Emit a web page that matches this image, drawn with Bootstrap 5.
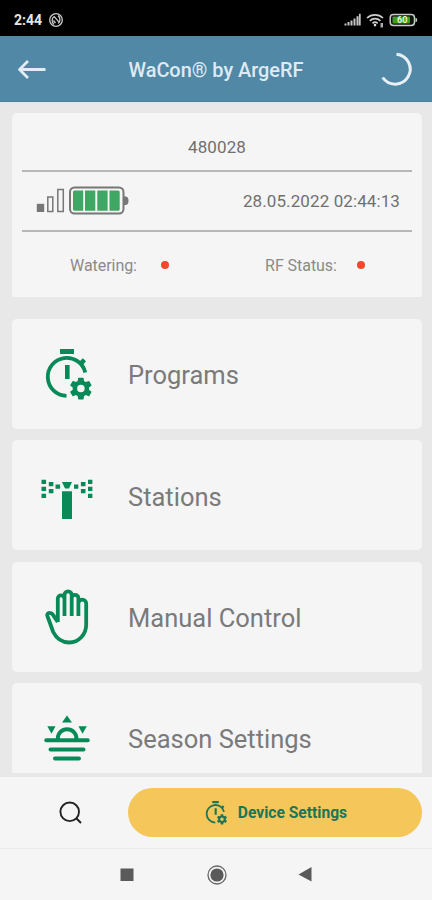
<!DOCTYPE html>
<html lang="en">
<head>
<meta charset="utf-8">
<meta name="viewport" content="width=device-width, initial-scale=1">
<title>WaCon® by ArgeRF</title>
<link href="https://cdn.jsdelivr.net/npm/bootstrap@5.3.0/dist/css/bootstrap.min.css" rel="stylesheet">
<style>
  body { font-family: Roboto, "Liberation Sans", sans-serif; background: #e8e8e8; color: #707070; }
  svg { display: block; flex-shrink: 0; }
  .phone { width: 432px; height: 900px; }
  .statusbar { height: 36px; background: #000; color: #e6e6e6; padding: 3px 12px 0 14px; }
  .clock { font-size: 14px; font-weight: 700; width: 30px; white-space: nowrap; padding-top: 1px; }
  .appbar { height: 66px; background: #5088a6; padding: 0 18px 0 17px; border-bottom: 1px solid #4a7f9b; }
  .apptitle { font-size: 19.9px; font-weight: 500; color: #dfeaf2; white-space: nowrap; padding: 4px 0 0 5px; }
  .content { padding: 11px 10px 0 12px; }
  .panel { background: #f5f5f5; border: 0; border-radius: 5px; color: #707070; }
  .info { height: 184px; padding: 0 10px; margin-bottom: 22px; font-size: 17px; border-radius: 5px 5px 2px 2px; }
  .serial { height: 59px; padding-top: 13px; border-bottom: 2px solid #b7b7b7; letter-spacing: .1px; }
  .meter { height: 60px; border-bottom: 2px solid #b7b7b7; padding: 0 12px 1px 14px; }
  .stamp { letter-spacing: .1px; padding-top: 3px; }
  .states { height: 65px; padding-top: 2px; font-size: 16px; color: #8a8a8a; }
  .states .slabel { letter-spacing: -.05px; padding-top: 1px; }
  .states .second { padding-left: 5px; }
  .dot { width: 8px; height: 8px; background: #f04a28; margin-top: -1px; }
  .second .dot { margin-left: 20px; margin-right: 4px; }
  .entry { height: 110px; margin-bottom: 11.4px; padding-left: 28px; font-size: 25.5px; color: #7a7a7a; font-weight: 400; }
  .entry span { margin-left: 32px; padding-top: 3px; }
  .entry svg { margin-top: 2px; }
  .clipped { height: 90px; padding-top: 25px; }
  .clipped span { padding-top: 12px; line-height: 38px; }
  .green { color: #078a58; }
  .actions { height: 72px; background: #f5f5f5; padding: 0 10px 0 57px; border-bottom: 1px solid #ebebeb; }
  .device { width: 294px; height: 49px; background: #f5c75b; color: #1b7656; font-size: 15.6px; font-weight: 700; }
  .device:hover { background: #eebf52; color: #1b7656; }
  .dlabel { padding: 3px 0 0 1px; }
  .sysnav { height: 51px; background: #f5f5f5; }
</style>
</head>
<body>
<svg width="0" height="0" class="position-absolute" aria-hidden="true">
  <symbol id="timer" viewBox="40 345 56 60">
    <path d="M85.3 372.5A19 19 0 1 0 66.5 395.8" fill="none" stroke="currentColor" stroke-width="3.8"/>
    <path d="M60 349h14v5H60zM65 365h4.6v14H65zM78.5 362.5l4.300-4.200 3.200 3-3.700 4.500z" fill="currentColor"/>
    <path transform="translate(67.2 374.900) scale(1.14)" fill="currentColor" d="M19.140 12.940c.04-.3.060-.61.060-.94 0-.32-.02-.64-.07-.94l2.030-1.580c.18-.14.230-.41.120-.61l-1.920-3.320c-.12-.22-.37-.29-.59-.22l-2.390.96c-.5-.38-1.030-.7-1.620-.94l-.36-2.540c-.04-.24-.24-.41-.48-.41h-3.840c-.24 0-.43.170-.47.410l-.36 2.540c-.59.240-1.130.570-1.620.940l-2.390-.96c-.22-.08-.47 0-.59.220L2.740 8.870c-.12.210-.08.470.120.610l2.030 1.580c-.05.300-.09.630-.09.940s.02.640.070.940l-2.030 1.580c-.18.140-.23.410-.12.610l1.920 3.320c.12.220.370.290.590.220l2.390-.96c.5.380 1.030.700 1.620.940l.36 2.540c.05.240.240.410.480.410h3.840c.24 0 .44-.17.470-.41l.36-2.540c.59-.24 1.130-.56 1.620-.94l2.390.96c.22.080.470 0 .59-.22l1.920-3.320c.12-.22.070-.47-.12-.61zM12 15.300a3.300 3.300 0 1 1 0-6.600 3.300 3.300 0 0 1 0 6.600z"/>
  </symbol>
</svg>

<div class="phone d-flex flex-column overflow-hidden">
  <div class="statusbar d-flex align-items-center flex-shrink-0">
    <span class="clock">2:44</span>
    <svg class="ms-1" width="16" height="16" viewBox="0 0 16 16" fill="none" stroke="#c9c9c9" stroke-width="1.300"><circle cx="8" cy="8" r="6.300"/><path d="M6 12.500C3.500 10.500 3.500 6 6.200 4.500L11 10.200M10 3.600c2.500 1.700 2.600 6 .2 8M5.500 8.500l2 2.500"/></svg>
    <div class="d-flex align-items-center ms-auto">
      <svg width="76" height="18" viewBox="344 10.500 76 18">
        <path d="M344.500 25v-2h2v2zM347.500 25v-3.500h2V25zM350.500 25v-5h2v5zM353.500 25v-7h2v7zM356.500 25v-9.200h2V25zM358.900 25V13.300h1.800V25z" fill="#c4c4c4"/>
        <g fill="none" stroke="#cfcfcf" stroke-width="1.700"><path d="M367 17.500c4.500-4.300 11.500-4.300 16 0M369.800 20.300c3-2.800 7.600-2.800 10.600 0M372.500 22.800c1.500-1.300 3.700-1.300 5.200 0"/></g>
        <circle cx="375" cy="24.600" r="1.300" fill="#ddd"/><path d="M380.500 22.500h2.500v4.500h-2.500z" fill="#aaa"/>
        <rect x="390.200" y="14" width="24.300" height="11" rx="3.200" fill="#111" stroke="#c9c9c9" stroke-width="1.500"/>
        <rect x="392.500" y="16" width="17.500" height="7" rx="1" fill="#38a018"/><path d="M415.500 17.300q1.800.5 1.800 2.200t-1.800 2.200z" fill="#c9c9c9"/>
        <text x="397" y="22.700" font-family="Roboto, sans-serif" font-size="9" font-weight="700" fill="#e5f6dd">60</text>
      </svg>
    </div>
  </div>

  <header class="appbar d-flex align-items-center justify-content-between flex-shrink-0">
    <svg width="30" height="22" viewBox="17 58 30 22" fill="none" stroke="#e3ecf2" stroke-width="2.800" stroke-linejoin="round"><path d="M45.500 69.500H19.500M28 61l-8.500 8.500L28 78"/></svg>
    <h1 class="apptitle m-0">WaCon® by ArgeRF</h1>
    <svg width="34" height="36" viewBox="379 51 34 36" fill="none" stroke="#e9f0f5" stroke-width="3"><path d="M395.500 54.200A15 15 0 1 1 381.700 77.500"/></svg>
  </header>

  <main class="content flex-grow-1 overflow-hidden">
    <section class="card panel info">
      <div class="serial d-flex align-items-center justify-content-center">480028</div>
      <div class="meter d-flex align-items-center justify-content-between">
        <svg width="96" height="32" viewBox="36 185 96 32">
          <g fill="none" stroke="#777" stroke-width="1.500"><path d="M47.800 197h5v14.500h-5zM57.800 189.500h5.500v22h-5.500z"/></g>
          <path d="M36.800 203.800h7.400v8.200h-7.400z" fill="#777"/>
          <path d="M124 196.500h2q2.500.5 2.500 4.200t-2.500 4.300h-2z" fill="#777"/>
          <rect x="70" y="187.500" width="53.500" height="26" rx="4.500" fill="#f5f5f5" stroke="#777" stroke-width="2"/>
          <path d="M73 192q0-1.500 1.500-1.500h8.700v20.300h-8.700q-1.500 0-1.500-1.500zM85 190.500h10.300v20.300H85zM97.300 190.500h10.300v20.300H97.300zM109.500 190.500h8.700q1.500 0 1.500 1.500v17.300q0 1.500-1.500 1.500h-8.700z" fill="#3fa763"/>
        </svg>
        <span class="stamp">28.05.2022 02:44:13</span>
      </div>
      <div class="states row g-0 align-items-center">
        <div class="col-6 d-flex align-items-center justify-content-center"><span class="slabel">Watering:</span><i class="dot rounded-circle ms-4"></i></div>
        <div class="second col-6 d-flex align-items-center justify-content-center"><span class="slabel">RF Status:</span><i class="dot rounded-circle"></i></div>
      </div>
    </section>

    <section class="card panel entry flex-row align-items-center">
      <svg class="green" width="56" height="60"><use href="#timer"/></svg>
      <span>Programs</span>
    </section>

    <section class="card panel entry flex-row align-items-center">
      <svg class="green" width="56" height="60" viewBox="40 466 56 60" fill="currentColor">
        <path d="M62 491.300h10V519H62zM62 482h10l-3 6.500h-4z"/>
        <path d="M41.500 479.800h4.600v4.200h-4.600zM41.500 486.800h4.600v4.200h-4.600zM41.500 493.800h4.600v4.200h-4.600zM48.800 482h4.600v4.200h-4.600zM48.800 489h4.600v4.200h-4.600zM55.500 484.500h4.600v4.200h-4.600zM74 484.500h4.300v4.200H74zM80.900 482h4.600v4.200h-4.600zM80.900 489h4.600v4.200h-4.600zM88 479.800h4.400v4.200H88zM88 486.800h4.400v4.200H88zM88 493.800h4.400v4.200H88z"/>
      </svg>
      <span>Stations</span>
    </section>

    <section class="card panel entry flex-row align-items-center">
      <svg class="green" width="56" height="60" viewBox="40 588 56 60" fill="none" stroke="currentColor" stroke-width="3.800" stroke-linejoin="round">
        <path d="M57.800 622V598.500a3.200 3.200 0 0 1 6.400 0M64.500 616V595a3.600 3.600 0 0 1 7.200 0V616M71.700 598.500a3.350 3.350 0 0 1 6.700-.5V616M78.400 603.500a3.900 3.900 0 0 1 7.800 0V624.500c0 10-7.500 18-17 18-8 0-13-4.500-16-10.500L47.600 616.500c-1-2.500.5-3.800 2.200-3.700 1.500 0 2.800 1.200 3.700 2.800l4.300 6.400"/>
      </svg>
      <span>Manual Control</span>
    </section>

    <section class="card panel entry clipped flex-row align-items-start rounded-bottom-0">
      <svg class="green" width="56" height="60" viewBox="40 710 56 60">
        <g fill="currentColor"><path d="M67 715.500l5 7H62zM47.300 726.300h8.200l-4 7.500zM78.500 726.300h8.300L82.500 733.800z"/></g>
        <path d="M46.200 740.300h41.600M50.500 749.500h33M55 758.500h24M57.800 739v-.5a9.300 9.300 0 0 1 18.600 0v.5" fill="none" stroke="currentColor" stroke-width="4" stroke-linecap="round"/>
      </svg>
      <span>Season Settings</span>
    </section>
  </main>

  <div class="actions d-flex align-items-center justify-content-between flex-shrink-0">
    <svg width="26" height="26" viewBox="56.500 800 26 26" fill="none" stroke="#222" stroke-width="1.900"><circle cx="69.200" cy="811.800" r="9.300"/><path d="M75.500 818l5 5"/></svg>
    <button type="button" class="device btn border-0 rounded-pill p-0 d-flex align-items-center justify-content-center">
      <svg width="26" height="28"><use href="#timer"/></svg><span class="dlabel ms-2">Device Settings</span>
    </button>
  </div>
  <nav class="sysnav flex-shrink-0">
    <svg width="432" height="51" viewBox="0 849 432 51" fill="#5a5a5a">
      <path d="M120.500 868.500h13v12.500h-13zM298.500 874.500l13-7.500v14.500z"/>
      <circle cx="217" cy="875" r="6.600"/><circle cx="217" cy="875" r="9" fill="none" stroke="#666" stroke-width="1.300"/>
    </svg>
  </nav>
</div>
</body>
</html>
